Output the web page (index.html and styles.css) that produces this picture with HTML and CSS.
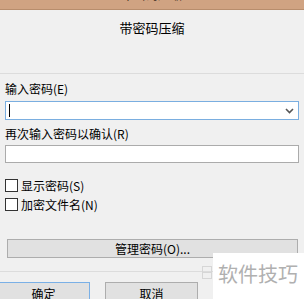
FILE: index.html
```html
<!DOCTYPE html>
<html>
<head>
    <title>带密码压缩</title>
    <meta charset="UTF-8">
    <link rel="stylesheet" href="styles.css">
</head>

<body>

<div class="titlebar"><span class="titlebar-text">带密码压缩</span></div>

<div class="header">带密码压缩</div>
<div class="divider"></div>

<div class="form">
    <div class="label">输入密码(E)</div>
    <div class="combo">
        <span class="caret"></span>
        <svg class="chevron" width="9" height="6" viewBox="0 0 9 6">
            <path d="M1 1 L4.5 4.5 L8 1" fill="none" stroke="#555" stroke-width="1.6"/>
        </svg>
    </div>

    <div class="label label-second">再次输入密码以确认(R)</div>
    <div class="textbox"></div>

    <div class="checks">
        <div class="check-row"><span class="checkbox"></span>显示密码(S)</div>
        <div class="check-row"><span class="checkbox"></span>加密文件名(N)</div>
    </div>

    <div class="btn btn-wide">管理密码(O)...</div>
</div>

<div class="divider divider-bottom"></div>

<div class="actions">
    <div class="btn btn-action btn-default">确定</div>
    <div class="btn btn-action">取消</div>
</div>

<!-- 水印 -->
<div class="watermark">
    <svg class="wm-icon" width="10" height="13" viewBox="0 0 10 13">
        <rect x="0.5" y="0.5" width="9" height="12" fill="none" stroke="#d6d6d6"/>
        <path d="M0.5 6.5 H9.5" stroke="#d6d6d6"/>
    </svg>
    <div class="wm-box">软件技巧</div>
</div>

</body>
</html>
```

FILE: styles.css
```css
body {
    margin: 0;
    width: 304px;
    height: 299px;
    overflow: hidden;
    position: relative;
    background-color: #f0f0f0;
    font-family: "Noto Sans CJK SC", sans-serif;
    font-size: 12px;
    color: #000;
}

.titlebar {
    height: 9px;
    background-color: #d0a382;
    border-bottom: 1px solid #b88d6c;
    overflow: hidden;
    text-align: center;
}

.titlebar-text {
    display: block;
    margin-top: -11px;
    line-height: 12px;
    color: #3a2a1c;
}

.header {
    height: 63px;
    padding-top: 10px;
    box-sizing: border-box;
    line-height: 16px;
    font-size: 13px;
    text-align: center;
}

.divider {
    height: 1px;
    background-color: #dcdcdc;
}

.form {
    padding: 0 5px;
    display: flex;
    flex-direction: column;
}

.label {
    margin-top: 7px;
    line-height: 16px;
}

.label-second {
    margin-top: 6px;
}

.combo {
    margin-top: 4px;
    height: 19px;
    box-sizing: border-box;
    border: 1px solid #7aaee0;
    background-color: #fff;
    display: flex;
    align-items: center;
    justify-content: space-between;
    padding: 0 4px 0 3px;
}

.caret {
    width: 1px;
    height: 13px;
    background-color: #000;
}

.chevron {
    margin-top: 1px;
}

.textbox {
    margin-top: 3px;
    height: 18px;
    box-sizing: border-box;
    border: 1px solid #ababab;
    background-color: #fff;
}

.checks {
    margin-top: 13px;
    display: flex;
    flex-direction: column;
}

.check-row {
    height: 19px;
    display: flex;
    align-items: center;
    gap: 3px;
    line-height: 16px;
}

.checkbox {
    width: 13px;
    height: 13px;
    box-sizing: border-box;
    border: 1px solid #333;
    background-color: #fff;
}

.btn {
    box-sizing: border-box;
    border: 1px solid #adadad;
    background-color: #e1e1e1;
    display: flex;
    align-items: center;
    justify-content: center;
    line-height: 16px;
}

.btn-wide {
    margin: 25px 1px 0 2px;
    height: 19px;
}

.divider-bottom {
    margin-top: 13px;
}

.actions {
    margin-top: 10px;
    margin-left: -3px;
    display: flex;
    gap: 15px;
}

.btn-action {
    width: 93px;
    height: 23px;
}

.btn-default {
    border-color: #7ab0e6;
}

/* 水印 */
.watermark {
    position: absolute;
    left: 202px;
    top: 253px;
    display: flex;
    align-items: flex-start;
}

.wm-icon {
    margin-top: 13px;
}

.wm-box {
    margin-left: 1px;
    width: 91px;
    height: 46px;
    background-color: #fff;
    color: #b0b0b0;
    font-size: 20px;
    line-height: 20px;
    padding: 11px 0 0 5px;
    box-sizing: border-box;
    white-space: nowrap;
}
```
